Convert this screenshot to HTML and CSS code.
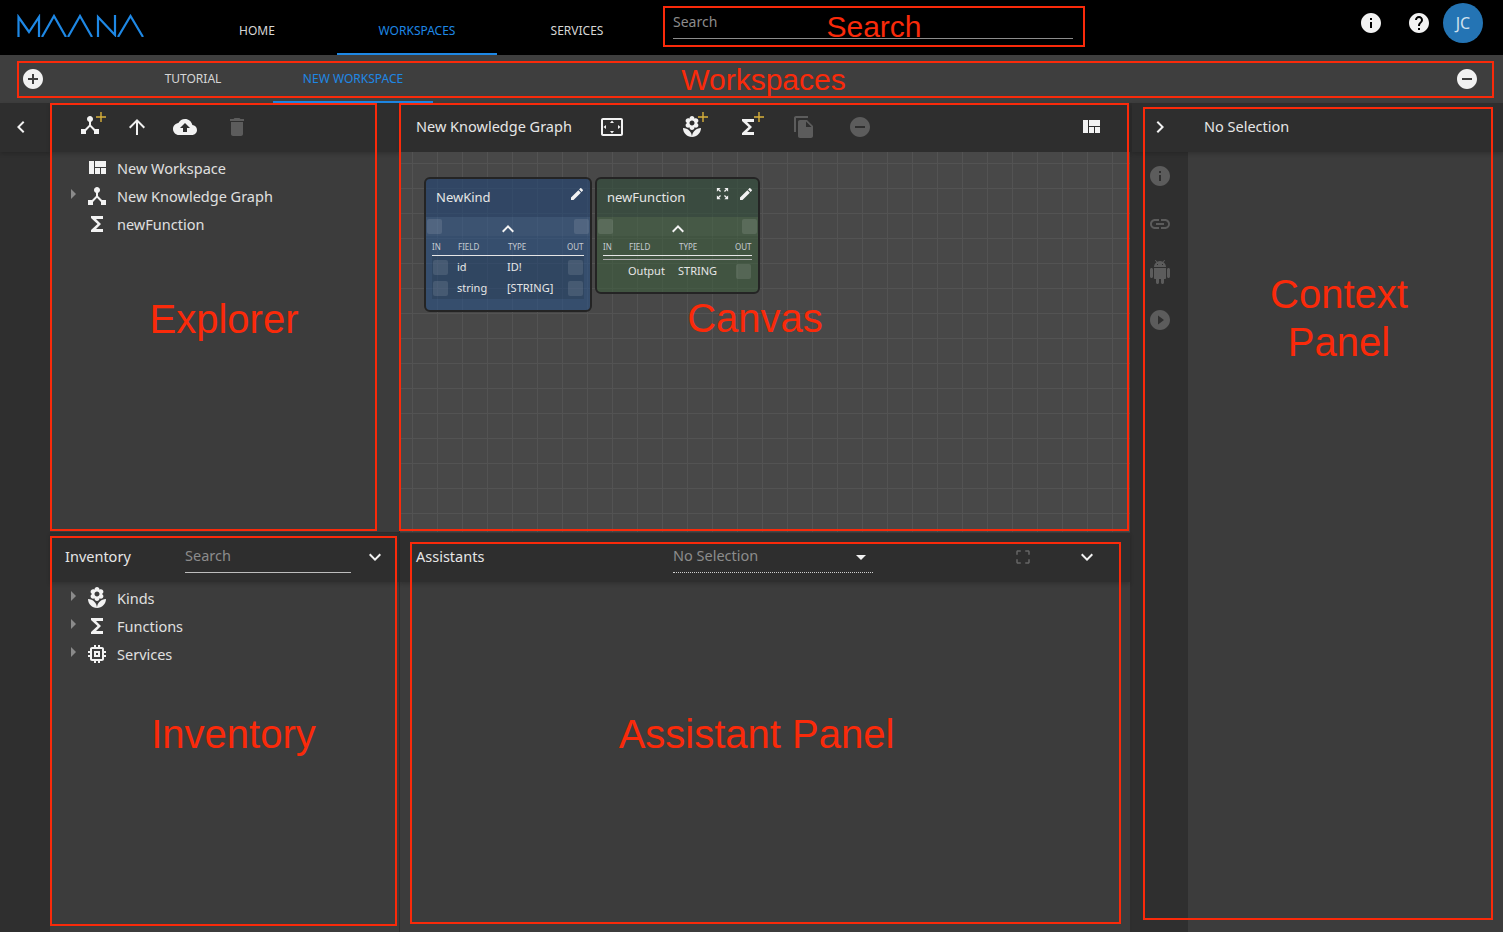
FILE: index.html

```html
<!DOCTYPE html>
<html lang="en">
<head>
  <meta charset="UTF-8" />
  <meta name="viewport" content="width=device-width, initial-scale=1.0"/>
  <title>Maana Workspaces</title>
  <link rel="stylesheet" href="styles.css">
</head>
<body>

<svg class="defs" aria-hidden="true">
  <symbol id="i-info" viewBox="0 0 24 24"><path d="M12 2C6.48 2 2 6.48 2 12s4.48 10 10 10 10-4.48 10-10S17.52 2 12 2zm1 15h-2v-6h2v6zm0-8h-2V7h2v2z"/></symbol>
  <symbol id="i-help" viewBox="0 0 24 24"><path d="M12 2C6.48 2 2 6.48 2 12s4.48 10 10 10 10-4.48 10-10S17.52 2 12 2zm1 17h-2v-2h2v2zm2.07-7.75l-.9.92C13.45 12.9 13 13.5 13 15h-2v-.5c0-1.1.45-2.1 1.17-2.83l1.24-1.26c.37-.36.59-.86.59-1.41 0-1.1-.9-2-2-2s-2 .9-2 2H8c0-2.21 1.79-4 4-4s4 1.79 4 4c0 .88-.36 1.68-.93 2.25z"/></symbol>
  <symbol id="i-add" viewBox="0 0 24 24"><path d="M12 2C6.48 2 2 6.48 2 12s4.48 10 10 10 10-4.48 10-10S17.52 2 12 2zm5 11h-4v4h-2v-4H7v-2h4V7h2v4h4v2z"/></symbol>
  <symbol id="i-remove" viewBox="0 0 24 24"><path d="M12 2C6.48 2 2 6.48 2 12s4.48 10 10 10 10-4.48 10-10S17.52 2 12 2zm5 11H7v-2h10v2z"/></symbol>
  <symbol id="i-left" viewBox="0 0 24 24"><path d="M15.41 7.41L14 6l-6 6 6 6 1.41-1.41L10.83 12z"/></symbol>
  <symbol id="i-right" viewBox="0 0 24 24"><path d="M10 6L8.59 7.41 13.17 12l-4.58 4.59L10 18l6-6z"/></symbol>
  <symbol id="i-up" viewBox="0 0 24 24"><path d="M4 12l1.41 1.41L11 7.83V20h2V7.83l5.58 5.59L20 12l-8-8-8 8z"/></symbol>
  <symbol id="i-cloud" viewBox="0 0 24 24"><path d="M19.35 10.04C18.67 6.59 15.64 4 12 4 9.11 4 6.6 5.64 5.35 8.04 2.34 8.36 0 10.91 0 14c0 3.31 2.69 6 6 6h13c2.76 0 5-2.24 5-5 0-2.64-2.05-4.78-4.65-4.96zM14 13v4h-4v-4H7l5-5 5 5h-3z"/></symbol>
  <symbol id="i-delete" viewBox="0 0 24 24"><path d="M6 19c0 1.1.9 2 2 2h8c1.1 0 2-.9 2-2V7H6v12zM19 4h-3.5l-1-1h-5l-1 1H5v2h14V4z"/></symbol>
  <symbol id="i-quilt" viewBox="0 0 24 24"><path d="M10 18h5v-6h-5v6zm-6 0h5V5H4v13zm12 0h5v-6h-5v6zM10 5v6h11V5H10z"/></symbol>
  <symbol id="i-fn" viewBox="0 0 24 24"><path d="M18 4H6v2l6.5 6L6 18v2h12v-3h-7l5-5-5-5h7z"/></symbol>
  <symbol id="i-kind" viewBox="0 0 24 24"><path d="M12 22c4.97 0 9-4.03 9-9-4.97 0-9 4.03-9 9zM5.6 10.25c0 1.38 1.12 2.5 2.5 2.5.53 0 1.01-.16 1.42-.44l-.02.19c0 1.38 1.12 2.5 2.5 2.5s2.5-1.12 2.5-2.5l-.02-.19c.4.28.89.44 1.42.44 1.38 0 2.5-1.12 2.5-2.5 0-1-.59-1.85-1.43-2.25.84-.4 1.43-1.25 1.43-2.25 0-1.38-1.12-2.5-2.5-2.5-.53 0-1.01.16-1.42.44l.02-.19C14.5 2.12 13.38 1 12 1S9.5 2.12 9.5 3.5l.02.19c-.4-.28-.89-.44-1.42-.44-1.38 0-2.5 1.12-2.5 2.5 0 1 .59 1.85 1.43 2.25-.84.4-1.43 1.25-1.43 2.25zM12 5.5c1.38 0 2.5 1.12 2.5 2.5s-1.12 2.5-2.5 2.5S9.5 9.38 9.5 8s1.12-2.5 2.5-2.5zM3 13c0 4.97 4.03 9 9 9 0-4.97-4.03-9-9-9z"/></symbol>
  <symbol id="i-chip" viewBox="0 0 24 24"><path d="M15 9H9v6h6V9zm-2 4h-2v-2h2v2zm8-2V9h-2V7c0-1.1-.9-2-2-2h-2V3h-2v2h-2V3H9v2H7c-1.1 0-2 .9-2 2v2H3v2h2v2H3v2h2v2c0 1.1.9 2 2 2h2v2h2v-2h2v2h2v-2h2c1.1 0 2-.9 2-2v-2h2v-2h-2v-2h2zm-4 6H7V7h10v10z"/></symbol>
  <symbol id="i-hub" viewBox="0 0 24 24"><path d="M17 16l-4-4V8.82C14.16 8.4 15 7.3 15 6c0-1.66-1.34-3-3-3S9 4.34 9 6c0 1.3.84 2.4 2 2.82V12l-4 4H3v5h5v-3.05l4-4.2 4 4.2V21h5v-5h-4z"/></symbol>
  <symbol id="i-edit" viewBox="0 0 24 24"><path d="M3 17.25V21h3.75L17.81 9.94l-3.75-3.75L3 17.25zM20.71 7.04c.39-.39.39-1.02 0-1.41l-2.34-2.34c-.39-.39-1.02-.39-1.41 0l-1.83 1.83 3.75 3.75 1.83-1.83z"/></symbol>
  <symbol id="i-less" viewBox="0 0 24 24"><path d="M12 8l-6 6 1.41 1.41L12 10.83l4.59 4.58L18 14z"/></symbol>
  <symbol id="i-more" viewBox="0 0 24 24"><path d="M16.59 8.59L12 13.17 7.41 8.59 6 10l6 6 6-6z"/></symbol>
  <symbol id="i-map" viewBox="0 0 24 24"><path d="M15 3l2.3 2.3-2.89 2.87 1.42 1.42L18.7 6.7 21 9V3zM3 9l2.3-2.3 2.87 2.89 1.42-1.42L6.7 5.3 9 3H3zm6 12l-2.3-2.3 2.89-2.87-1.42-1.42L5.3 17.3 3 15v6zm12-6l-2.3 2.3-2.87-2.89-1.42 1.42 2.89 2.87L15 21h6z"/></symbol>
  <symbol id="i-crop" viewBox="0 0 24 24"><path d="M3 5v4h2V5h4V3H5c-1.1 0-2 .9-2 2zm2 10H3v4c0 1.1.9 2 2 2h4v-2H5v-4zm14 4h-4v2h4c1.1 0 2-.9 2-2v-4h-2v4zm0-16h-4v2h4v4h2V5c0-1.1-.9-2-2-2z"/></symbol>
  <symbol id="i-overscan" viewBox="0 0 24 24"><path d="M12.01 5.5L10 8h4l-1.99-2.5zM18 10v4l2.5-1.99L18 10zM6 10l-2.5 2.01L6 14v-4zm8 6h-4l2.01 2.5L14 16zm7-13H3c-1.1 0-2 .9-2 2v14c0 1.1.9 2 2 2h18c1.1 0 2-.9 2-2V5c0-1.1-.9-2-2-2zm0 16.01H3V4.99h18v14.02z"/></symbol>
  <symbol id="i-copy" viewBox="0 0 24 24"><path d="M16 1H4c-1.1 0-2 .9-2 2v14h2V3h12V1zm-1 4l6 6v10c0 1.1-.9 2-2 2H7.99C6.89 23 6 22.1 6 21l.01-14c0-1.1.89-2 1.99-2h7zm-1 7h5.5L14 6.5V12z"/></symbol>
  <symbol id="i-link" viewBox="0 0 24 24"><path d="M3.9 12c0-1.71 1.39-3.1 3.1-3.1h4V7H7c-2.76 0-5 2.24-5 5s2.24 5 5 5h4v-1.9H7c-1.71 0-3.1-1.39-3.1-3.1zM8 13h8v-2H8v2zm9-6h-4v1.9h4c1.71 0 3.1 1.39 3.1 3.1s-1.39 3.1-3.1 3.1h-4V17h4c2.76 0 5-2.24 5-5s-2.24-5-5-5z"/></symbol>
  <symbol id="i-android" viewBox="0 0 24 24"><path d="M6 18c0 .55.45 1 1 1h1v3.5c0 .83.67 1.5 1.5 1.5s1.5-.67 1.5-1.5V19h2v3.5c0 .83.67 1.5 1.5 1.5s1.5-.67 1.5-1.5V19h1c.55 0 1-.45 1-1V8H6v10zM3.5 8C2.67 8 2 8.67 2 9.5v7c0 .83.67 1.5 1.5 1.5S5 17.33 5 16.5v-7C5 8.67 4.33 8 3.5 8zm17 0c-.83 0-1.5.67-1.5 1.5v7c0 .83.67 1.5 1.5 1.5s1.5-.67 1.5-1.5v-7c0-.83-.67-1.5-1.5-1.5zm-4.97-5.84l1.3-1.3c.2-.2.2-.51 0-.71-.2-.2-.51-.2-.71 0l-1.48 1.48C13.85 1.23 12.95 1 12 1c-.96 0-1.86.23-2.66.63L7.85.15c-.2-.2-.51-.2-.71 0-.2.2-.2.51 0 .71l1.31 1.31C6.97 3.26 6 5.01 6 7h12c0-1.99-.97-3.75-2.47-4.84zM10 5H9V4h1v1zm5 0h-1V4h1v1z"/></symbol>
  <symbol id="i-play" viewBox="0 0 24 24"><path d="M12 2C6.48 2 2 6.48 2 12s4.48 10 10 10 10-4.48 10-10S17.52 2 12 2zm-2 14.5v-9l6 4.5-6 4.5z"/></symbol>
  <symbol id="i-caret" viewBox="0 0 24 24"><path d="M10 17l5-5-5-5v10z"/></symbol>
  <symbol id="i-drop" viewBox="0 0 24 24"><path d="M7 10l5 5 5-5z"/></symbol>
  <symbol id="i-plus" viewBox="0 0 10 10"><path d="M4.3 0h1.4v4.3H10v1.4H5.7V10H4.3V5.7H0V4.3h4.3z"/></symbol>
</svg>

<header class="topbar">
  <svg class="logo" viewBox="0 0 127 23" fill="none" stroke="#1e88e5" stroke-width="2.2">
    <path d="M1.500 23V3l10.500 15L22 3v20"/>
    <path d="M25 23L37 2l12 21"/>
    <path d="M51 23L63 2l12 21"/>
    <path d="M81 23V3l17 18V1"/>
    <path d="M101 23L113.500 2 126 23"/>
  </svg>
  <nav class="main-tabs">
    <a class="tab">HOME</a>
    <a class="tab active">WORKSPACES</a>
    <a class="tab">SERVICES</a>
  </nav>
  <div class="top-search">Search</div>
  <div class="top-actions">
    <svg class="icon"><use href="#i-info"/></svg>
    <svg class="icon"><use href="#i-help"/></svg>
    <div class="avatar">JC</div>
  </div>
</header>

<div class="wsbar">
  <svg class="icon"><use href="#i-add"/></svg>
  <div class="ws-tabs">
    <a class="tab">TUTORIAL</a>
    <a class="tab active">NEW WORKSPACE</a>
  </div>
  <svg class="icon"><use href="#i-remove"/></svg>
</div>

<main class="layout">
  <aside class="left-rail">
    <div class="head rail-head"><svg class="icon"><use href="#i-left"/></svg></div>
  </aside>

  <section class="panel explorer">
    <div class="head explorer-head">
      <span class="tool"><svg class="icon"><use href="#i-hub"/></svg><svg class="plus"><use href="#i-plus"/></svg></span>
      <svg class="icon"><use href="#i-up"/></svg>
      <svg class="icon"><use href="#i-cloud"/></svg>
      <svg class="icon off"><use href="#i-delete"/></svg>
    </div>
    <ul class="tree">
      <li><span class="caret"></span><svg class="icon"><use href="#i-quilt"/></svg>New Workspace</li>
      <li><svg class="caret"><use href="#i-caret"/></svg><svg class="icon"><use href="#i-hub"/></svg>New Knowledge Graph</li>
      <li><span class="caret"></span><svg class="icon"><use href="#i-fn"/></svg>newFunction</li>
    </ul>
  </section>

  <section class="panel canvas-panel">
    <div class="head canvas-head">
      <span class="title">New Knowledge Graph</span>
      <svg class="icon"><use href="#i-overscan"/></svg>
      <span class="tool"><svg class="icon"><use href="#i-kind"/></svg><svg class="plus"><use href="#i-plus"/></svg></span>
      <span class="tool"><svg class="icon"><use href="#i-fn"/></svg><svg class="plus"><use href="#i-plus"/></svg></span>
      <svg class="icon off"><use href="#i-copy"/></svg>
      <svg class="icon off"><use href="#i-remove"/></svg>
      <span></span>
      <svg class="icon"><use href="#i-quilt"/></svg>
    </div>
    <div class="canvas">
      <div class="node kind">
        <div class="node-title"><span>NewKind</span><svg class="mini"><use href="#i-edit"/></svg></div>
        <div class="node-band"><i class="port"></i><svg class="chev"><use href="#i-less"/></svg><i class="port"></i></div>
        <div class="node-table">
          <div class="row row-head"><span class="small">IN</span><span>FIELD</span><span>TYPE</span><span class="small">OUT</span></div>
          <div class="rows">
            <div class="row"><i class="port"></i><span>id</span><span>ID!</span><i class="port"></i></div>
            <div class="row"><i class="port"></i><span>string</span><span>[STRING]</span><i class="port"></i></div>
          </div>
        </div>
      </div>
      <div class="node fn">
        <div class="node-title"><span>newFunction</span><svg class="mini expand"><use href="#i-map"/></svg><svg class="mini"><use href="#i-edit"/></svg></div>
        <div class="node-band"><i class="port"></i><svg class="chev"><use href="#i-less"/></svg><i class="port"></i></div>
        <div class="node-table">
          <div class="row row-head"><span class="small">IN</span><span>FIELD</span><span>TYPE</span><span class="small">OUT</span></div>
          <div class="rows">
            <div class="row"><span></span><span>Output</span><span>STRING</span><i class="port"></i></div>
          </div>
        </div>
      </div>
    </div>
  </section>

  <aside class="context">
    <div class="head context-head">
      <svg class="icon"><use href="#i-right"/></svg>
      <span class="title">No Selection</span>
    </div>
    <div class="context-body">
      <div class="context-rail">
        <svg class="icon off"><use href="#i-info"/></svg>
        <svg class="icon off"><use href="#i-link"/></svg>
        <svg class="icon off"><use href="#i-android"/></svg>
        <svg class="icon off"><use href="#i-play"/></svg>
      </div>
    </div>
  </aside>

  <section class="panel inventory">
    <div class="head inv-head">
      <span class="title">Inventory</span>
      <div class="inv-search">Search</div>
      <svg class="icon"><use href="#i-more"/></svg>
    </div>
    <ul class="tree">
      <li><svg class="caret"><use href="#i-caret"/></svg><svg class="icon"><use href="#i-kind"/></svg>Kinds</li>
      <li><svg class="caret"><use href="#i-caret"/></svg><svg class="icon"><use href="#i-fn"/></svg>Functions</li>
      <li><svg class="caret"><use href="#i-caret"/></svg><svg class="icon"><use href="#i-chip"/></svg>Services</li>
    </ul>
  </section>

  <section class="panel assistants">
    <div class="head asst-head">
      <span class="title">Assistants</span>
      <div class="asst-select">No Selection<svg class="icon"><use href="#i-drop"/></svg></div>
      <svg class="icon crop"><use href="#i-crop"/></svg>
      <svg class="icon"><use href="#i-more"/></svg>
    </div>
  </section>
</main>

<!-- red callouts drawn on top of the screenshot -->
<div class="note box-search"><span class="note-small">Search</span></div>
<div class="note box-workspaces"><span class="note-small">Workspaces</span></div>
<div class="note box-explorer"><span>Explorer</span></div>
<div class="note box-canvas"><span>Canvas</span></div>
<div class="note box-inventory"><span>Inventory</span></div>
<div class="note box-assistant"><span>Assistant Panel</span></div>
<div class="note box-context"><span>Context<br>Panel</span></div>

</body>
</html>
```

FILE: styles.css

```css
* { box-sizing: border-box; }
html, body { height: 100%; }
body {
  margin: 0;
  width: 1503px;
  height: 932px;
  overflow: hidden;
  position: relative;
  background-color: #3c3c3c;
  color: #e6e6e6;
  font-family: "Noto Sans", "Open Sans", sans-serif;
  font-size: 14.5px;
}
a { display: block; }
.defs { position: absolute; width: 0; height: 0; }
.icon { width: 24px; height: 24px; fill: #f2f2f2; flex: none; display: block; }
.icon.off { fill: #5c5c5c; }

/* top bar */
.topbar {
  height: 55px;
  background-color: #000;
  display: flex;
  align-items: center;
}
.logo { width: 127px; height: 23px; margin: 0 33px 4px 17px; flex: none; }
.main-tabs { display: flex; height: 55px; }
.tab {
  width: 160px;
  text-align: center;
  font-size: 12px;
  color: #d6d6d6;
  line-height: 62px;
}
.tab.active { color: #1e88e5; border-bottom: 2px solid #1e88e5; }
.top-search {
  width: 400px;
  height: 24px;
  margin: 0 0 2px 16px;
  border-bottom: 1px solid #8c8c8c;
  color: #8c8c8c;
  font-size: 14px;
  line-height: 14px;
}
.top-actions {
  display: flex;
  align-items: center;
  align-self: flex-start;
  margin: 3px 0 0 286px;
}
.top-actions .icon:nth-child(2) { margin-left: 24px; }
.avatar {
  width: 40px;
  height: 40px;
  margin-left: 12px;
  border-radius: 50%;
  background-color: #2474b4;
  color: #cfe0ee;
  font-size: 16px;
  line-height: 40px;
  text-align: center;
}

/* workspace strip */
.wsbar {
  height: 48px;
  padding: 0 24px 0 21px;
  display: flex;
  align-items: center;
  justify-content: space-between;
  background-color: #3e3e3e;
}
.ws-tabs { display: flex; height: 48px; flex: 1; margin-left: 68px; }
.ws-tabs .tab { line-height: 47px; }

/* panels */
.layout {
  display: grid;
  grid-template-columns: 50px 349px 731px 373px;
  grid-template-rows: 430px 399px;
  height: 829px;
  background-color: #2e2e2e;
}
.head {
  height: 49px;
  padding-bottom: 1px;
  background-color: #2e2e2e;
  box-shadow: 0 2px 4px rgba(0,0,0,0.18);
  position: relative;
}
.title { padding-bottom: 2px; }
.panel { background-color: #3c3c3c; }
.left-rail { grid-row: 1 / 3; background-color: #2f2f2f; }
.rail-head { display: flex; align-items: center; padding-left: 9px; }
.explorer, .inventory { width: 349px; }
.explorer { border-bottom: 1px solid #2c2c2c; }
.explorer-head {
  display: grid;
  grid-template-columns: 46px 48px 52px 24px;
  align-items: center;
  padding-left: 29px;
}
.tool { position: relative; display: block; width: 24px; height: 24px; }
.plus { position: absolute; width: 10px; height: 10px; left: 18px; top: -3px; fill: #d9b13b; }
.explorer-head .tool .icon { margin: -2px 0 0 -1px; }
.explorer-head .plus { left: 17px; }

.tree { list-style: none; margin: 0; padding: 2px 0 0 11px; }
.tree li { display: flex; align-items: center; height: 28px; color: #e0e0e0; }
.tree .icon { margin-right: 8px; }
.caret { display: block; width: 24px; height: 24px; fill: #8a8a8a; flex: none; margin-top: -5px; }

.canvas-panel { margin-left: 1px; width: 730px; }
.canvas-head {
  display: grid;
  grid-template-columns: 184px 80px 56px 56px 56px 24px 1fr 24px;
  align-items: center;
  padding: 0 27px 1px 16px;
}
.canvas {
  height: 380px;
  position: relative;
  background-color: #484848;
  background-image:
    linear-gradient(#535353 1px, transparent 1px),
    linear-gradient(90deg, #535353 1px, transparent 1px);
  background-size: 25px 25px;
  background-position: 12px 11px;
}

/* nodes on the canvas */
.node {
  position: absolute;
  top: 25px;
  border: 2px solid #242424;
  border-radius: 6px;
  overflow: hidden;
  font-size: 11px;
  color: #e6e6e6;
}
.node.kind { left: 24px; width: 168px; height: 135px; background-color: rgba(43,83,135,0.6); }
.node.fn { left: 195px; width: 165px; height: 117px; background-color: rgba(58,95,58,0.5); }
.node-title {
  height: 38px;
  padding: 0 5px 3px 10px;
  display: flex;
  align-items: center;
  font-size: 13px;
  background-color: rgba(30,40,60,0.18);
}
.fn .node-title { padding-right: 4px; }
.node-title span { flex: 1; }
.mini { width: 16px; height: 16px; fill: #f2f2f2; flex: none; margin-top: -6px; }
.mini.expand { margin-right: 8px; width: 15px; height: 15px; }
.node-band {
  height: 19px;
  padding: 0 1px;
  display: flex;
  align-items: center;
  justify-content: space-between;
  background-color: rgba(255,255,255,0.03);
}
.chev { width: 24px; height: 24px; fill: #f2f2f2; flex: none; margin-top: 4px; }
.port { display: block; width: 15px; height: 15px; border-radius: 2px; background-color: rgba(255,255,255,0.11); }
.node-table { padding: 0 6px; }
.row {
  display: grid;
  grid-template-columns: 24px 50px 1fr 15px;
  align-items: center;
  height: 21px;
  margin: 0 1px 0 1px;
}
.row > span { padding-bottom: 2px; }
.row-head {
  height: 20px;
  margin: 0;
  padding-top: 2px;
  font-size: 8px;
  color: #c6ccd2;
  border-bottom: 1px solid #e6e6e6;
  grid-template-columns: 26px 50px 1fr 17px;
}
.row-head > span { padding: 0; }
.small { font-size: 8px; }
.kind .rows { background-color: rgba(0,0,0,0.1); padding-top: 1px; }
.fn .rows { border-top: 1px solid #a8a8a8; margin-top: 3px; padding-top: 1px; }
.fn .row { height: 20px; }

/* context panel */
.context { grid-column: 4; grid-row: 1 / 3; margin-left: 2px; background-color: #3c3c3c; }
.context-head { display: flex; align-items: center; padding-left: 16px; }
.context-head span { margin-left: 32px; }
.context-body { height: 780px; }
.context-rail {
  width: 56px;
  height: 100%;
  background-color: #2f2f2f;
  display: flex;
  flex-direction: column;
  align-items: center;
  gap: 24px;
  padding-top: 12px;
}

/* bottom row */
.inventory { grid-column: 2; grid-row: 2; }
.inv-head { display: flex; padding-left: 15px; align-items: center; }
.inv-head .title { width: 120px; }
.inv-search {
  width: 166px;
  height: 40px;
  margin-right: 12px;
  align-self: flex-start;
  padding-top: 12px;
  color: #8c8c8c;
  border-bottom: 1px solid #bdbdbd;
}
.assistants { grid-column: 3; grid-row: 2; margin-left: 1px; width: 730px; }
.asst-head { display: flex; align-items: center; padding-left: 16px; }
.asst-head .title { width: 257px; }
.asst-select {
  width: 200px;
  height: 40px;
  align-self: flex-start;
  padding-top: 12px;
  color: #8c8c8c;
  position: relative;
  border-bottom: 1px dotted #d0d0d0;
}
.asst-select .icon { position: absolute; right: 0; top: 12px; }
.icon.crop { width: 18px; height: 18px; fill: #666; margin: 0 43px 0 141px; }

/* red callouts */
.note {
  position: absolute;
  border: 2px solid #fa2a0a;
  color: #fa2a0a;
  font-family: "Liberation Sans", Arial, sans-serif;
  font-size: 40px;
  line-height: 48px;
  text-align: center;
  display: flex;
  align-items: center;
  justify-content: center;
}
.note-small { font-size: 30px; line-height: 30px; }
.box-search { left: 663px; top: 6px; width: 422px; height: 41px; }
.box-workspaces { left: 17px; top: 61px; width: 1477px; height: 37px; padding: 1px 0 0 16px; }
.box-explorer { left: 50px; top: 103px; width: 327px; height: 428px; padding: 4px 0 0 21px; }
.box-canvas { left: 399px; top: 103px; width: 730px; height: 428px; padding: 2px 18px 0 0; }
.box-inventory { left: 50px; top: 536px; width: 347px; height: 390px; padding: 6px 0 0 20px; }
.box-assistant { left: 410px; top: 542px; width: 711px; height: 382px; padding: 2px 18px 0 0; }
.box-context { left: 1143px; top: 107px; width: 350px; height: 813px; }
.box-context span { margin: 0 0 392px 42px; }
```
